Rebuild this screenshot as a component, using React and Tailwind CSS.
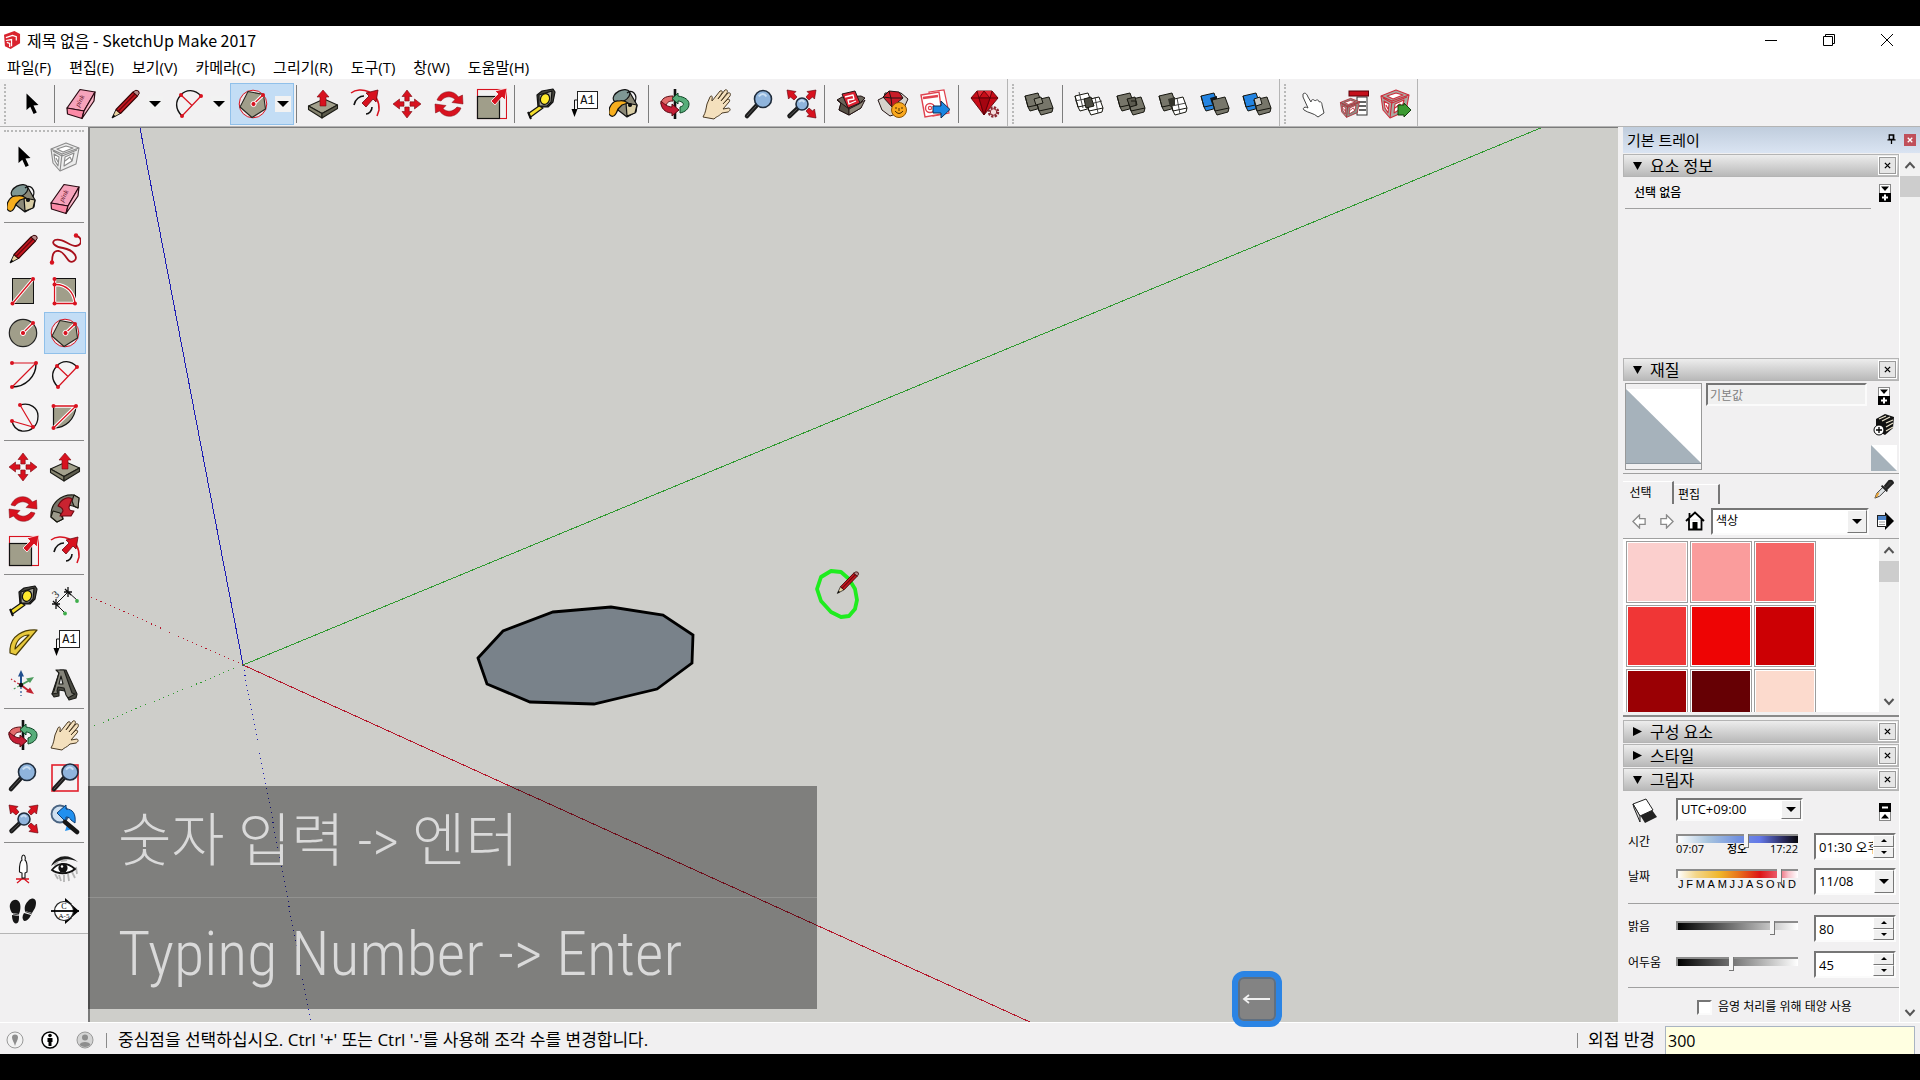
import { Fragment, useState } from "react";
import { clsx } from "clsx";

const RED = "#d8121f";
const STONE = "#a09e8a";
const DARK = "#77766a";

/* ---------- Tool icons, all drawn on a 32x32 grid ---------- */

const Dots = ({ points, r = 2 }) =>
  points.map(([x, y]) => <circle key={`${x}-${y}`} cx={x} cy={y} r={r} fill={RED} />);

const RedLine = ({ d }) => (
  <>
    <path d={d} fill="none" stroke="#fff" strokeWidth="3.4" />
    <path d={d} fill="none" stroke={RED} strokeWidth="1.3" />
  </>
);

const Lens = ({ cx = 20, cy = 11, r = 8.5, hx = 4, hy = 28 }) => (
  <>
    <path d={`M${cx - r * 0.7} ${cy + r * 0.7} L${hx} ${hy}`} stroke="#1b1b1b" strokeWidth="4.5" strokeLinecap="round" />
    <path d={`M${cx - r * 0.7 - 1} ${cy + r * 0.7 + 1} L${hx} ${hy}`} stroke="#555" strokeWidth="1" strokeLinecap="round" />
    <circle cx={cx} cy={cy} r={r} fill="#8fb4dc" stroke="#1f2c3c" strokeWidth="1.6" />
    <path d={`M${cx - r * 0.5} ${cy - r * 0.3} Q${cx} ${cy - r * 0.9} ${cx + r * 0.4} ${cy - r * 0.3}`} fill="none" stroke="#c9def2" strokeWidth="2" />
  </>
);

const Cube = ({ x = 0, y = 0, fill = DARK, stroke = "#16160f" }) => (
  <g transform={`translate(${x} ${y})`} stroke={stroke} strokeWidth="1" strokeLinejoin="round">
    <path d="M0 3 L13 0 L17 11 L16 15 L5 18 L3 14 Z" fill={fill} />
    <path d="M3 14 L17 11 M0 3 L3 14" fill="none" />
  </g>
);

const Box3D = ({ color = "#8b8b8b", fill = "#ececec" }) => (
  <g fill={fill} stroke={color} strokeWidth="1.1" strokeLinejoin="round">
    <path d="M2 8 L17 2 L30 7 L27 23 L11 30 L4 22 Z" />
    <path d="M2 8 L13 13 L30 7 M13 13 L11 30 M4 10 L13 15 L28 9" fill="none" />
    <path d="M8 8 L17 5 L24 7 L14 11 Z" fill="#fff" />
    <path d="M16 16 L25 12 L23 20 L15 25 Z" fill="#fff" />
    <path d="M5 13 L10 16 L9 25 L6 20 Z" fill="#fff" />
    <path d="M16 20 L21 16 L23 20 M7 17 L9 21" fill="none" />
  </g>
);

const ICONS = {
  select: <path d="M11.5 5.5 V22 L15.3 18.7 L18.6 26 L21.8 24.5 L18.5 17.5 L23.5 17 Z" fill="#000" />,
  component: <Box3D />,
  bucket: (
    <g stroke="#111" strokeWidth="1.2" strokeLinejoin="round">
      <path d="M6 9 L20 3 L28 17 L27 24 L18 29 L9 22 Z" fill="#8b8877" />
      <path d="M17 15 L28 17 L26 25 L18 28 Z" fill="#d9cda5" />
      <ellipse cx="12.5" cy="8" rx="9" ry="5.5" transform="rotate(-28 12.5 8)" fill="#7f9794" />
      <path d="M10 13 C4 12 -1 19 0 26 C4 31 7 27 9 21 L13 17 L19 15 C16 13 13 12 10 13 Z" fill="#f7ae1e" />
      <path d="M18 5 C23 0 29 7 26 14" fill="none" />
      <circle cx="21" cy="17" r="1.5" fill="#111" />
    </g>
  ),
  eraser: (
    <g stroke="#2a0a12" strokeWidth="1.2" strokeLinejoin="round">
      <path d="M2 20 L15 1.5 L30 4 L19 23 Z" fill="#f6a3bb" />
      <path d="M2 20 L19 23 L17 30.5 L2.5 26 Z" fill="#fb8aa6" />
      <path d="M19 23 L30 4 L29 13 L17 30.5 Z" fill="#f9b7c9" />
      <text x="12" y="18" transform="rotate(-62 14 17)" fontSize="7" fontStyle="italic" fill="#5e1226" stroke="none" className="font-['Liberation_Serif']">
        pink
      </text>
    </g>
  ),
  pencil: (
    <g strokeLinejoin="round">
      <path d="M3 30 L7 21.5 L11.5 25.5 Z" fill="#e9d3a1" stroke="#222" strokeWidth="1" />
      <path d="M3 30 L4.5 26.5 L6.5 28.3 Z" fill="#000" />
      <path d="M7 21.5 L24 4 L28.5 8 L11.5 25.5 Z" fill="#c5161f" stroke="#360406" strokeWidth="1.1" />
      <path d="M9 23.5 L26 6" stroke="#6d070d" strokeWidth="1.4" />
      <path d="M24 4 Q27 1 29.5 3 Q31.5 5 28.5 8 Z" fill="#b98a8a" stroke="#360406" strokeWidth="1" />
    </g>
  ),
  freehand: (
    <>
      <path
        d="M27 3 C33 4 34 12 27 13 C20 13 13 4 6 7 C1 10 7 14 14 15 C25 17 30 25 25 28 C18 32 18 20 10 18 C4 17 3 23 3 29"
        fill="none"
        stroke="#a80f1b"
        strokeWidth="1.8"
      />
      <Dots points={[[27, 2.5], [3, 29.5]]} r={2.2} />
    </>
  ),
  rectangle: (
    <>
      <rect x="5.5" y="3.5" width="21" height="25" fill={STONE} stroke="#111" />
      <RedLine d="M5.5 28.5 L26 4" />
      <Dots points={[[5.5, 28.5], [26, 4]]} />
    </>
  ),
  rotatedRectangle: (
    <>
      <rect x="5.5" y="3.5" width="21" height="25" fill={STONE} stroke="#111" />
      <RedLine d="M5.5 4 V28.5 H26 M5.5 9.5 C18 9 25 18 26 28" />
      <Dots points={[[5.5, 4], [5.5, 9.5], [5.5, 28.5], [26, 28.5]]} />
    </>
  ),
  circle: (
    <>
      <circle cx="16" cy="16" r="13.7" fill={STONE} stroke="#222" strokeWidth="1.2" />
      <RedLine d="M16 16 L26 6" />
      <circle cx="16" cy="16" r="2.6" fill={RED} stroke="#fff" />
      <Dots points={[[26, 6]]} />
    </>
  ),
  polygon: (
    <>
      <circle cx="16" cy="16" r="13.8" fill="#f3e6ea" stroke={RED} strokeWidth="1" />
      <path d="M11 3.5 L26.5 6.5 L28.5 21 L15 29.5 L3 19 Z" fill={STONE} stroke="#26261f" strokeWidth="1.1" />
      <RedLine d="M16.5 16 L26 7" />
      <circle cx="16.5" cy="16" r="2.6" fill={RED} stroke="#fff" />
      <Dots points={[[26, 7]]} />
    </>
  ),
  arc: (
    <>
      <path d="M29 5 C29 17 19 28 5 28" fill="none" stroke="#111" strokeWidth="1.4" />
      <path d="M5 4 H29 L5 28" fill="none" stroke={RED} strokeWidth="1.2" />
      <Dots points={[[5, 4], [29, 4], [5, 28]]} />
    </>
  ),
  twoPointArc: (
    <>
      <path d="M28 8 C22 1 13 1 8 7 C2 13 2 21 9 28" fill="none" stroke="#111" strokeWidth="1.4" />
      <path d="M28 8 L9 28 M8 7 L19 17.5" fill="none" stroke={RED} strokeWidth="1.2" />
      <Dots points={[[8, 7], [28, 8], [9, 28]]} />
    </>
  ),
  threePointArc: (
    <>
      <path d="M13 4 C23 1 31 7 31 15 C31 26 23 31 15 30 C9 29 6 25 5 20" fill="none" stroke="#111" strokeWidth="1.3" />
      <path d="M13 4 L26 26 L5 20" fill="none" stroke={RED} strokeWidth="1.2" />
      <Dots points={[[13, 4], [26, 26], [5, 20]]} />
    </>
  ),
  pie: (
    <>
      <path d="M4.5 5 H27 C26 19 16 27 4.5 27 Z" fill={STONE} stroke="#111" strokeWidth="1.2" />
      <RedLine d="M4.5 27 L27 5 H4.5" />
      <Dots points={[[4.5, 5], [27, 5], [4.5, 27]]} />
    </>
  ),
  move: (
    <g fill={RED} stroke="#7a0a12" strokeWidth="0.6">
      {[0, 90, 180, 270].map((angle) => (
        <path key={angle} transform={`rotate(${angle} 16 16)`} d="M16 2 L21 8.5 H18.2 V13 H13.8 V8.5 H11 Z" />
      ))}
    </g>
  ),
  pushPull: (
    <>
      <g stroke="#1c1c16" strokeWidth="1.1" strokeLinejoin="round">
        <path d="M1.5 18 L17 11 L30.5 17 L15 25.5 Z" fill="#a3a18d" />
        <path d="M1.5 18 V21.5 L15 30 V25.5 Z" fill="#86846f" />
        <path d="M15 25.5 L30.5 17 V20.5 L15 30 Z" fill="#5d5c4d" />
      </g>
      <path d="M16 2 L22 9 H19 V18 H13 V9 H10 Z" fill={RED} stroke="#7a0a12" strokeWidth="0.6" />
    </>
  ),
  rotate: (
    <g fill={RED} stroke="#7a0a12" strokeWidth="0.5">
      <path d="M4 12 C8 2 20 1 25.5 9 L29.5 7 L30 16 L19 14.5 L22 11.5 C18 7.5 12 8 8 13 Z" />
      <path d="M28 20 C24 30 12 31 6.5 23 L2.5 25 L2 16 L13 17.5 L10 20.5 C14 24.5 20 24 24 19 Z" />
    </g>
  ),
  followMe: (
    <g stroke="#17170f" strokeWidth="1.1" strokeLinejoin="round">
      <path d="M2 24 C1 10 12 1 25 2 L30 5 L29 15 L24 13 C18 11 12 17 14 26 L8 29 Z" fill={DARK} />
      <path d="M2 24 L4 18 L11 20 L14 26 L8 29 Z M25 2 L23 8 L25 13 L29 15 L30 5 Z" fill="#9b9a8b" />
      <path d="M9 13 C12 6 19 3 23 6 L20 14 C20 17 21 18 25 18 L22 23 L11 23 L14 18 C14 15 12 14 9 13 Z" fill="#c92330" stroke="#6d0710" />
    </g>
  ),
  scale: (
    <>
      <rect x="2.5" y="1.5" width="29" height="29" fill="none" stroke={RED} strokeWidth="1.1" />
      <rect x="2.5" y="8.5" width="22" height="22" fill={STONE} stroke="#111" strokeWidth="1.2" />
      <path d="M16 13 L23 6 L20 3 L32 0 L30 12 L27 9 L20 17 Z" fill={RED} stroke="#fff" strokeWidth="0.8" />
    </>
  ),
  offset: (
    <>
      <path d="M2 5 C11 -2 31 3 30 22 L28 28" fill="none" stroke={RED} strokeWidth="1.5" />
      <path d="M5 17 C6 11 11 8 15 8 M23 19 C23 23 20 26 17 26" fill="none" stroke="#111" strokeWidth="1.6" />
      <path d="M13 15 L20 8 L17 5 L29 2 L27 14 L24 11 L17 19 Z" fill={RED} stroke="#6d0710" strokeWidth="0.8" />
    </>
  ),
  tape: (
    <g stroke="#111" strokeWidth="1.2" strokeLinejoin="round">
      <path d="M12 7 L17 3 L28 1 L30 4 L28 14 L23 19 L13 19 Z" fill="#45453d" />
      <path d="M14 7 L27 3 L26 14 L22 18 L14 18 Z" fill="#a5a498" />
      <ellipse cx="20" cy="11" rx="4.5" ry="5.5" transform="rotate(20 20 11)" fill="#ffe92e" />
      <path d="M14 18 L4 25 L5 29.5 L18 20 Z" fill="#f3dd2d" />
      <path d="M3 24 L6 31" strokeWidth="2" />
    </g>
  ),
  dimension: (
    <>
      <path d="M7 19 L19 7 M7 19 L16 28 M19 7 L28 15" stroke="#111" strokeWidth="1" />
      <path d="M3 19 H11 M7 14 V24 M4 16 L10 22 M15 7 H23 M19 2 V12 M16 4 L22 10" stroke="#111" strokeWidth="1.3" />
      <text x="4" y="12" transform="rotate(-42 8 9)" fontSize="11" fill="#222" className="font-['Liberation_Serif']">3</text>
      <circle cx="16" cy="28.5" r="1.9" fill="#3fae4b" />
      <circle cx="28" cy="16" r="1.9" fill="#3fae4b" />
    </>
  ),
  protractor: (
    <g stroke="#4a3c05" strokeWidth="1.2" strokeLinejoin="round">
      <path d="M30 3 C16 2 4 9 3 22 L3 26 L9 28 Z" fill="#e8c93c" />
      <path d="M22 8 C15 8 9 13 8 22 Z" fill="#f5f5f5" />
    </g>
  ),
  text: (
    <>
      <path d="M10 12 H7.5 V22" fill="none" stroke="#111" />
      <path d="M4.5 21 H10.5 L7.5 29 Z" fill="#000" />
      <rect x="10.5" y="3.5" width="20" height="17" fill="#fff" stroke="#222" />
      <text x="20.5" y="16" textAnchor="middle" fontSize="12" fill="#111" className="font-['Liberation_Mono']">A1</text>
    </>
  ),
  axes: (
    <>
      <path d="M14 16 V6" stroke="#22508f" strokeWidth="2" />
      <path d="M14 1 L17 7.5 H11 Z" fill="#22508f" />
      <path d="M14 16 L23 11" stroke="#4d9c5e" strokeWidth="2" />
      <path d="M27 8 L23 14 L19 9.5 Z" fill="#4d9c5e" />
      <path d="M14 16 L22 22" stroke="#c22230" strokeWidth="2" />
      <path d="M27 25 L19 23 L23 18.5 Z" fill="#c22230" />
      <path d="M14 18 V27" stroke="#22508f" strokeWidth="1.2" strokeDasharray="2 2" />
      <path d="M12 15 L4 10" stroke="#c22230" strokeWidth="1.2" strokeDasharray="2 2" />
      <path d="M12 17 L5 21" stroke="#4d9c5e" strokeWidth="1.2" strokeDasharray="2 2" />
      <circle cx="14" cy="16" r="2.2" fill="#111" />
    </>
  ),
  text3d: (
    <g stroke="#1c1c18" strokeWidth="1.1" strokeLinejoin="round">
      <path d="M11 1 L17 1 L28 25 L27 29 L20 31 L16 22 L10 21 L10 27 L5 28 L3 25 Z" fill="#4a4a42" />
      <path d="M7 1 L15 1 L23 24 L26 25 L19 29 L17 26 L15 19 L9 18 L8 22 L9 24 L3 25 L5 22 L10 4 Z" fill="#85847a" />
      <path d="M12 7 L14 15 L10 15 Z" fill="#f0f0f0" />
    </g>
  ),
  orbit: (
    <>
      <path d="M16 1 V31" stroke="#111" strokeWidth="2.6" />
      <g strokeWidth="1" strokeLinejoin="round">
        <path d="M14 8 C6 8 2 11 2 16 L7 18 C8 14 10 13 14 13 Z" fill="#e26b6b" stroke="#5a0b12" />
        <path d="M2 16 C3 22 8 25 13 25 L13 28 L20 22 L13 16 L13 19 C9 19 5 16 2 13 Z" fill="#c41e36" stroke="#5a0b12" />
        <path d="M19 8 C26 9 30 12 30 16 C30 21 26 24 21 25 V19 C24 18 25 17 24 15 C23 14 21 13 19 13 V16 L13 10.5 L19 5 Z" fill="#57ad7a" stroke="#0d4424" />
      </g>
    </>
  ),
  hand: (
    <path
      d="M2 29 C5 24 5 20 6 16 L9 9 C10 7 12 8 11 11 L11 13 L19 3 C21 2 22 4 21 5 L17 11 L24 2 C26 1 27 3 26 5 L20 13 L27 5 C29 4 30 6 29 8 L22 16 L27 11 C29 11 29 13 28 14 L22 21 L28 20 C30 21 29 23 27 24 L21 25 C17 29 16 28 13 31 Z"
      fill="#f4e0bd"
      stroke="#4a3a24"
      strokeWidth="1"
      strokeLinejoin="round"
    />
  ),
  zoom: <Lens />,
  zoomWindow: (
    <>
      <rect x="3" y="4" width="26" height="26" fill="none" stroke="#e3202c" strokeWidth="1.6" />
      <Lens cx={21} cy={11} r={8} hx={5} hy={28} />
    </>
  ),
  zoomExtents: (
    <>
      <Lens cx={17} cy={16} r={6} hx={4.5} hy={28} />
      <g fill={RED} stroke="#5a0008" strokeWidth="0.6">
        <path d="M2 2 L11 3.5 L9 5.5 L12 9 L9 12 L5.5 9 L3.5 11 Z" />
        <path d="M31 2 L22 3.5 L24 5.5 L21 9 L24 12 L27.5 9 L29.5 11 Z" />
        <path d="M31 30 L22 28.5 L24 26.5 L21 23 L24 20 L27.5 23 L29.5 21 Z" />
      </g>
    </>
  ),
  zoomPrevious: (
    <>
      <circle cx="11" cy="11" r="8.5" fill="#cfe0f0" stroke="#4a6482" strokeWidth="1.8" />
      <path d="M8 10 L17 2 V6 C24 6 27 11 26 20 L22 17 C21 15 20 14 17 14 V19 Z" fill="#2190ef" stroke="#0b3d75" strokeWidth="1" />
      <path d="M18 22 L16 28 L24 26 Z" fill="#2190ef" />
      <path d="M16 19 L28 29" stroke="#161616" strokeWidth="4.5" strokeLinecap="round" />
    </>
  ),
  positionCamera: (
    <>
      <path d="M10 30 L16 25 L22 30 M9 26 L22 26" stroke={RED} strokeWidth="1.3" fill="none" />
      <path d="M16.5 2 C18.5 2 18.5 6 18 7 C21 9 20 16 20 19 L18 20 V25 H15 V20 L12.5 19 C12.5 16 12 9 15 7 C14.5 6 14.5 2 16.5 2 Z" fill="#fff" stroke="#111" strokeWidth="1.1" />
    </>
  ),
  eye: (
    <>
      <path d="M2 13 C7 2 19 0 29 9 C20 4 10 6 2 13 Z" fill="#1a1a1a" />
      <path d="M6 21 L9 26 M10 22 L12 28 M15 22 L15 29 M19 21 L20 28 M23 19 L26 25 M27 14 L28 21 M5 12 L9 9 M12 8 L18 7" stroke="#b5b5b5" strokeWidth="1.8" />
      <path d="M3 17 C8 10 17 8 26 16 C19 22 8 21 3 17 Z" fill="#fff" stroke="#111" strokeWidth="1.8" />
      <circle cx="14" cy="15" r="4.6" fill="#111" />
      <circle cx="13" cy="13.5" r="1.2" fill="#fff" />
    </>
  ),
  walk: (
    <>
      <g fill="#161616">
        <path d="M5 6 C11 2 15 8 13 16 L12 19 L5 18 C2 13 2 9 5 6 Z M5 20 L12 21 C12 25 12 28 9 28.5 C6 28 5 24 5 20 Z" />
        <path d="M22 5 C27 1 31 5 28 13 L25 18 L18 16 C17 11 19 8 22 5 Z M17 18 L24 20 C22 24 20 26 17 26 C15 24 15 21 17 18 Z" />
      </g>
      <path d="M6 19 L12 20 M18 16.5 L25 19" stroke="#161616" strokeWidth="0.8" />
    </>
  ),
  section: (
    <>
      <path d="M16 3 L23 9 H16 Z M16 29 L23 23 H16 Z M22 9 L30 16 L22 23 Z" fill="#000" />
      <circle cx="15" cy="16" r="9.5" fill="#fff" stroke="#222" strokeWidth="1.2" />
      <path d="M2 16 H30" stroke="#000" strokeWidth="1.8" />
      <text x="15" y="14" textAnchor="middle" fontSize="8" className="font-['Liberation_Serif']">C</text>
      <text x="15" y="23" textAnchor="middle" fontSize="7" className="font-['Liberation_Serif']">A-5</text>
    </>
  ),
  warehouse: (
    <g stroke="#231414" strokeWidth="1" strokeLinejoin="round">
      <path d="M2 12 L7 9 L26 8 L30 10 L26 14 L26 20 L14 27 L4 22 L6 15 Z" fill="#6a655b" />
      <path d="M2 12 L6 15 L4 22 L14 27 L14 21 Z" fill="#565046" />
      <path d="M7 6 L20 3 L25 15 L13 20 Z" fill="#d92030" />
      <path d="M10 9 L18 7 L19 11 L13 12 L14 16 L21 13" fill="none" stroke="#fff" strokeWidth="1.3" />
      <path d="M14 21 L24 16 L30 12 L26 20 L14 27 Z" fill="#8c8678" />
    </g>
  ),
  extensionWarehouse: (
    <g stroke="#231414" strokeWidth="1" strokeLinejoin="round">
      <path d="M1 12 L7 9 L8 5 L24 5 L31 11 L25 24 L13 28 L5 22 Z" fill="#d6d2cc" />
      <path d="M6 9 L12 3 L22 4 L26 10 L15 19 Z" fill="#c91d28" />
      <path d="M6 9 L14 10 L26 10 M12 3 L14 10 L15 19" fill="none" />
      <circle cx="22" cy="22" r="7.5" fill="#f9a71c" stroke="#8a5304" />
      <path d="M18 23 Q22 28 26 23 M19 19 V21 M25 19 V21 M22 20 V23" fill="none" stroke="#4b2c00" />
    </g>
  ),
  sendLayout: (
    <>
      <path d="M10 4 L25 2 L30 25 L14 28 Z" fill="#fff" stroke="#e0424e" strokeWidth="1.2" />
      <path d="M2 7 L20 4 L23 26 L6 29 Z" fill="#fff" stroke="#e0424e" strokeWidth="1.4" />
      <path d="M4 10 L19 8" stroke="#e0424e" strokeWidth="2.5" />
      <circle cx="11" cy="20" r="4.5" fill="none" stroke="#e0424e" strokeWidth="1.4" />
      <circle cx="11" cy="20" r="1.6" fill="none" stroke="#e0424e" strokeWidth="1.2" />
      <path d="M14 18 H22 V13 L31 21.5 L22 30 V25 H14 Z" fill="#1a86e2" stroke="#0b2d52" strokeWidth="1" />
    </>
  ),
  ruby: (
    <>
      <g stroke="#5c0007" strokeWidth="0.9" strokeLinejoin="round">
        <path d="M2 10 L8 3 H23 L29 10 L15 27 Z" fill="#c80c18" />
        <path d="M8 3 L10 10 L15 3 L21 10 L23 3 M2 10 H29 M10 10 L15 27 L21 10" fill="#e02a36" />
        <path d="M10 10 L15 27 L21 10 Z" fill="#a40410" />
      </g>
      <circle cx="24.5" cy="24" r="4.5" fill="#f5dede" stroke="#8a2630" strokeWidth="2.5" strokeDasharray="2.2 1.3" />
      <circle cx="24.5" cy="24" r="3.2" fill="#f5dede" stroke="#8a2630" strokeWidth="1" />
    </>
  ),
  outerShell: (
    <>
      <Cube x={2} y={5} />
      <Cube x={13} y={9} />
      <path d="M11 11 L18 9 L20 15 L13 17 Z" fill="#8d8c7e" stroke="#16160f" />
    </>
  ),
  intersect: (
    <>
      <Cube x={2} y={5} fill="#fff" />
      <Cube x={13} y={9} fill="#fff" />
      <path d="M6 4 L10 20 M2 13 L16 10 M17 16 L29 13 M22 9 L25 25" stroke="#333" strokeWidth="0.9" />
      <path d="M11 11 L18 9 L21 18 L13 20 Z" fill="#4b4b42" stroke="#16160f" />
    </>
  ),
  union: (
    <>
      <Cube x={2} y={5} />
      <Cube x={13} y={9} />
      <path d="M12 11 L20 9 L22 17 L15 19 Z M16 13 H21 V17" fill="#5a594e" stroke="#16160f" />
    </>
  ),
  subtract: (
    <>
      <Cube x={2} y={5} />
      <Cube x={13} y={9} fill="#fff" />
      <path d="M20 10 L23 26 M15 18 L29 15" stroke="#333" strokeWidth="0.9" />
      <path d="M11 11 L18 9 L18 17 L13 19 Z" fill="#33332b" />
    </>
  ),
  trim: (
    <>
      <Cube x={2} y={5} fill="#2384e2" />
      <path d="M11 10 L18 8 V14 L13 16 Z" fill="#101820" />
      <Cube x={13} y={9} />
    </>
  ),
  split: (
    <>
      <Cube x={2} y={5} fill="#2384e2" />
      <Cube x={13} y={9} />
      <path d="M13 11 L19 9 L21 16 L15 18 Z" fill="#c9c9c5" stroke="#16160f" />
    </>
  ),
  interact: (
    <path
      d="M6 6 C8 4 10 6 11 9 L14 14 C14 11 17 11 18 13 C20 11 22 12 22 14 C24 13 25 15 25 17 L27 25 L21 29 C17 25 11 25 7 22 C5 20 8 18 11 20 L6 9 Z"
      fill="#fff"
      stroke="#444"
      strokeWidth="1"
      transform="translate(2 0)"
    />
  ),
  componentOptions: (
    <>
      <rect x="20" y="9" width="10" height="18" fill="#fff" stroke="#333" />
      <path d="M22 14 H29 M22 18 H29 M22 22 H29" stroke="#333" strokeWidth="1.5" />
      <rect x="12" y="3" width="19.5" height="5" fill="#c5111d" stroke="#5a0008" />
      <g transform="translate(2 9) scale(.68)">
        <Box3D color="#b51f2c" fill="#8d8d85" />
      </g>
    </>
  ),
  componentAttributes: (
    <>
      <Box3D color="#cf2c3a" fill="#a9a9a2" />
      <path d="M19 17 H25 V15 L32 22 L25 29 V27 H19 Z" fill="#3c9a32" stroke="#123f0d" />
    </>
  ),
};

const Icon = ({ name }) => (
  <svg viewBox="0 0 32 32" className="h-8 w-8 shrink-0" aria-hidden="true">
    {ICONS[name]}
  </svg>
);

/* ---------- Top toolbar ---------- */

const menus = ["파일(F)", "편집(E)", "보기(V)", "카메라(C)", "그리기(R)", "도구(T)", "창(W)", "도움말(H)"];

const toolbars = [
  [
    ["select"],
    ["eraser", "pencil+", "twoPointArc+", "polygon+"],
    ["pushPull", "offset", "move", "rotate", "scale"],
    ["tape", "text", "bucket"],
    ["orbit", "hand", "zoom", "zoomExtents"],
    ["warehouse", "extensionWarehouse", "sendLayout"],
    ["ruby"],
  ],
  [["outerShell"], ["intersect", "union", "subtract", "trim", "split"]],
  [["interact", "componentOptions", "componentAttributes"]],
];

const Caret = ({ className, up }) => (
  <svg viewBox="0 0 12 6" className={className} preserveAspectRatio="none" aria-hidden="true">
    <path d={up ? "M0 6 L6 0 L12 6 Z" : "M0 0 L6 6 L12 0 Z"} fill="#000" />
  </svg>
);

const ToolButton = ({ name, active, onClick }) => (
  <button
    aria-label={name}
    onClick={onClick}
    className={clsx(
      "flex h-[42px] w-[42px] items-center justify-center border",
      active ? "border-[#90c0ea] bg-[#c3ddf5]" : "border-transparent"
    )}
  >
    <Icon name={name} />
  </button>
);

const SplitButton = ({ name, active, onClick }) => (
  <div
    className={clsx(
      "flex h-[42px] w-16 items-center border",
      active ? "border-[#90c0ea] bg-[#c3ddf5]" : "border-transparent"
    )}
  >
    <button aria-label={name} onClick={onClick} className="flex w-11 justify-center">
      <Icon name={name} />
    </button>
    <button aria-label={`${name} menu`} className="flex h-4 w-4 items-center justify-center bg-[#f2f2f2]">
      <Caret className="h-[6px] w-[12px]" />
    </button>
  </div>
);

const Toolbar = ({ tool, setTool }) => (
  <div className="flex h-12 shrink-0 border-b border-[#b4b4b4] bg-[#f2f1f2]">
    {toolbars.map((groups, i) => (
      <div key={i} className="flex items-center border-r border-[#b5b5b5] pt-[2px] pr-px">
        <div className="mr-1 ml-1 h-[40px] border-l-2 border-dotted border-[#b9b9b9]" />
        {groups.map((group, j) => (
          <Fragment key={j}>
            {j > 0 && <div className="mr-[5px] ml-[2px] h-[38px] w-px bg-[#7d7d7d]" />}
            {group.map((item) => {
              const name = item.replace("+", "");
              const Button = item.endsWith("+") ? SplitButton : ToolButton;
              return (
                <Button
                  key={item}
                  name={name}
                  active={name === tool && item.endsWith("+")}
                  onClick={() => setTool(name)}
                />
              );
            })}
          </Fragment>
        ))}
      </div>
    ))}
  </div>
);

/* ---------- Left palette ---------- */

const palette = [
  ["select", "component", "bucket", "eraser"],
  [
    "pencil", "freehand", "rectangle", "rotatedRectangle", "circle",
    "polygon", "arc", "twoPointArc", "threePointArc", "pie",
  ],
  ["move", "pushPull", "rotate", "followMe", "scale", "offset"],
  ["tape", "dimension", "protractor", "text", "axes", "text3d"],
  ["orbit", "hand", "zoom", "zoomWindow", "zoomExtents", "zoomPrevious"],
  ["positionCamera", "eye", "walk", "section"],
];

const Palette = ({ tool, setTool }) => (
  <aside className="w-[88px] shrink-0">
    <div className="border-b border-[#b5b5b5] bg-[#f4f3f4] pt-[3px] pb-px">
      <div className="mx-1 mb-1 border-t-2 border-dotted border-[#b9b9b9]" />
      {palette.map((group, i) => (
        <Fragment key={i}>
          {i > 0 && <div className="mx-1 mt-[2px] mb-[5px] h-px bg-[#8a8a8a]" />}
          <div className="grid w-[86px] grid-cols-2 pl-[2px]">
            {group.map((name) => (
              <ToolButton key={name} name={name} active={name === tool} onClick={() => setTool(name)} />
            ))}
          </div>
        </Fragment>
      ))}
    </div>
  </aside>
);

/* ---------- Model view ---------- */

const Viewport = () => (
  <main className="relative min-w-0 flex-1 border-t border-l-2 border-[#7b7b7b] bg-[#cececa]">
    <svg viewBox="90 128 1528 894" preserveAspectRatio="xMinYMin slice" className="absolute inset-0 h-full w-full">
      <g strokeWidth="1" fill="none" shapeRendering="crispEdges">
        <path d="M243 665 L140 128" stroke="#1c1cb4" />
        <path d="M243 665 L1543 127" stroke="#2f9a2f" />
        <path d="M243 665 L1030 1022" stroke="#b4182c" />
        <path d="M243 665 L89 596" stroke="#b4182c" strokeDasharray="1 4" />
        <path d="M243 665 L89 728" stroke="#2f9a2f" strokeDasharray="1 4" />
        <path d="M243 665 L311 1022" stroke="#1c1cb4" strokeDasharray="1 4" />
      </g>
      <path
        d="M478 658 L503 631 L553 612 L611 607 L663 615 L693 635 L692 663 L657 689 L594 704 L530 702 L487 684 Z"
        fill="#79828a"
        stroke="#000"
        strokeWidth="2.8"
      />
      <path
        d="M831 571 L841 572 L849 579 L855 589 L857 600 L855 609 L849 616 L841 617 L831 612 L821 601 L817 589 L821 577 Z"
        fill="none"
        stroke="#1fec1f"
        strokeWidth="3.8"
        strokeLinejoin="round"
      />
      <g transform="translate(835 570) scale(.78)">{ICONS.pencil}</g>
    </svg>
    <div className="absolute bottom-[13px] left-[-2px] w-[729px] bg-black/38 font-['Roboto_Condensed','Noto_Sans_CJK_KR',sans-serif] leading-[111px] font-light text-[#dadada]">
      <p className="border-b border-white/15 pl-[30px] text-[58px]">숫자 입력 -&gt; 엔터</p>
      <p className="pl-[30px] text-[62px]">Typing Number -&gt; Enter</p>
    </div>
    <div className="absolute right-[336px] bottom-[-5px] flex h-[56px] w-[50px] items-center justify-center rounded-[12px] border-[6px] border-[#2b84e4] bg-[#838383] shadow-[inset_0_0_0_2px_#5f6f80]">
      <svg viewBox="0 0 32 20" className="h-5 w-8" aria-label="←">
        <path d="M3 10 H29 M8 6 L3 10 L8 14" fill="none" stroke="#f0f0f0" strokeWidth="1.8" />
      </svg>
    </div>
  </main>
);

/* ---------- Tray ---------- */

const sunken = "border-2 border-t-[#767676] border-l-[#767676] border-r-[#fbfbfb] border-b-[#fbfbfb]";
const raised = "border border-t-white border-l-white border-r-[#777] border-b-[#777] bg-[#f0f0f0]";

const SectionHeader = ({ title, open }) => (
  <div className="mb-px flex h-[23px] shrink-0 items-center border border-[#b4b4b4] bg-linear-to-b from-[#ededed] to-[#b9b9b9] pr-[2px] pl-[9px]">
    <button className="flex flex-1 items-center gap-2 text-left text-[16px] leading-5">
      <svg viewBox="0 0 10 10" className="h-[9px] w-[9px]" aria-hidden="true">
        <path d={open ? "M0 1 H10 L5 10 Z" : "M0 0 L10 5 L0 10 Z"} />
      </svg>
      {title}
    </button>
    <button aria-label={`${title} close`} className="flex h-[17px] w-[17px] items-center justify-center border border-[#9b9b9b] bg-[#e6e6e6] outline outline-white">
      <svg viewBox="0 0 8 8" className="h-[7px] w-[7px]" aria-hidden="true">
        <path d="M1 1 L7 7 M7 1 L1 7" stroke="#000" strokeWidth="1.5" />
      </svg>
    </button>
  </div>
);

const ExpandIcon = ({ flip }) => (
  <svg viewBox="0 0 12 18" className={clsx("h-[18px] w-3", flip && "rotate-180")} aria-hidden="true">
    <rect x=".5" y=".5" width="11" height="17" fill="#fff" stroke="#888" />
    <path d="M2 2.5 H10 L6 7 Z" />
    <rect y="9" width="12" height="9" />
    <path d={flip ? "M3 13.5 H9" : "M3 13.5 H9 M6 10.5 V16.5"} stroke="#fff" strokeWidth="2" />
  </svg>
);

const Chevron = ({ down }) => (
  <svg viewBox="0 0 12 8" className={clsx("h-2 w-3", down && "rotate-180")} aria-hidden="true">
    <path d="M1.5 7 L6 2 L10.5 7" fill="none" stroke="#555" strokeWidth="2" />
  </svg>
);

const ScrollBar = ({ className }) => (
  <div className={clsx("flex flex-col items-center bg-[#f1f1f1]", className)}>
    <div className="flex h-[22px] items-center"><Chevron /></div>
    <div className="h-[21px] w-full bg-[#cdcdcd]" />
    <div className="mt-auto flex h-[18px] items-center"><Chevron down /></div>
  </div>
);

const DropDown = ({ id, label, value, className }) => (
  <div className={clsx("flex bg-white", sunken, className)}>
    <select id={id} aria-label={label} className="min-w-0 flex-1 appearance-none bg-white pl-[3px] outline-none">
      <option>{value}</option>
    </select>
    <span className={clsx("pointer-events-none flex w-5 items-center justify-center", raised)}>
      <Caret className="h-[5px] w-[10px]" />
    </span>
  </div>
);

const Spinner = ({ id, value }) => (
  <div className={clsx("flex h-[27px] w-[82px] bg-white", sunken)}>
    <input id={id} defaultValue={value} className="w-[57px] min-w-0 pl-[3px] leading-5 outline-none" />
    <div className="flex w-[21px] flex-col">
      <button aria-label="up" className={clsx("flex flex-1 items-center justify-center", raised)}>
        <Caret up className="h-[3px] w-[6px]" />
      </button>
      <button aria-label="down" className={clsx("flex flex-1 items-center justify-center", raised)}>
        <Caret className="h-[3px] w-[6px]" />
      </button>
    </div>
  </div>
);

const sliderBase =
  "relative block h-[9px] w-full appearance-none bg-transparent [&::-webkit-slider-runnable-track]:h-[9px] [&::-webkit-slider-runnable-track]:border-t-2 [&::-webkit-slider-runnable-track]:border-l-2 [&::-webkit-slider-runnable-track]:border-[#8c8c8c] [&::-webkit-slider-thumb]:mt-[-2px] [&::-webkit-slider-thumb]:h-[14px] [&::-webkit-slider-thumb]:w-[5px] [&::-webkit-slider-thumb]:appearance-none [&::-webkit-slider-thumb]:border-r [&::-webkit-slider-thumb]:border-b [&::-webkit-slider-thumb]:border-[#777] [&::-webkit-slider-thumb]:bg-[#f4f4f4]";

const sliderTracks = {
  time: "[&::-webkit-slider-runnable-track]:bg-[linear-gradient(90deg,#fff,#a8c4de_25%,#7292e0_50%,#6478e8_68%,#2a2a5c_88%,#08080c)]",
  date: "[&::-webkit-slider-runnable-track]:bg-[linear-gradient(90deg,#fff,#f3d68a_15%,#efb52a_35%,#e8741c_50%,#dd1414_68%,#ec6070_84%,#f8c4cc_92%,#fff)]",
  gray: "[&::-webkit-slider-runnable-track]:bg-[linear-gradient(90deg,#000,#fff)]",
};

const Slider = ({ label, value, track }) => (
  <input type="range" aria-label={label} defaultValue={value} className={clsx(sliderBase, sliderTracks[track])} />
);

const ShadowRow = ({ id, label, slider, field, children, className }) => (
  <div className={clsx("flex h-[27px] items-start", className)}>
    <label htmlFor={id} className={clsx("w-[48px] shrink-0 text-[12px] leading-[18px]", !children && "pt-[3px]")}>
      {label}
    </label>
    <div className={clsx("w-[122px]", children ? "pt-px" : "pt-[6px]")}>
      {slider}
      {children}
    </div>
    <div className="ml-4">{field}</div>
  </div>
);

const swatches = [
  "bg-[#fbcfcd]", "bg-[#fa9c9c]", "bg-[#f56666]",
  "bg-[#f03636]", "bg-[#ee0404]", "bg-[#cc0004]",
  "bg-[#9a0004]", "bg-[#660004]", "bg-[#fcdacd]",
];

const Halves = ({ className }) => (
  <svg viewBox="0 0 10 10" preserveAspectRatio="none" className={className} aria-hidden="true">
    <path d="M0 0 H10 V10 Z" fill="#fff" />
    <path d="M0 0 L10 10 H0 Z" fill="#a6b2bb" />
  </svg>
);

const Materials = () => (
  <section>
    <SectionHeader title="재질" open />
    <div className="flex h-[92px] border-b border-[#a0a0a0] pt-px pl-[2px]">
      <div className="h-[87px] w-[77px] border border-[#999] pt-[5px]">
        <Halves className="h-[75px] w-full border-b border-[#8a959e]" />
      </div>
      <input
        aria-label="재질 이름"
        disabled
        defaultValue="기본값"
        className={clsx("ml-1 h-[23px] w-[161px] bg-[#f0f0f0] pl-[2px] text-[12px] text-[#808080]", sunken)}
      />
      <div className="ml-[3px] flex w-[27px] flex-col items-center gap-[9px] pt-1">
        <ExpandIcon />
        <svg viewBox="0 0 22 22" className="h-[22px] w-[22px]" aria-hidden="true">
          <path d="M3 5 L12 0 L21 3 L20 14 L12 21 L3 16 Z" fill="#111" />
          <path d="M6 5 L13 2 M9 7 L17 3 M13 9 L20 6 M13 13 L20 9 M13 17 L20 13" stroke="#e8e0c8" strokeWidth="1.3" />
          <circle cx="6" cy="16" r="5" fill="#fff" stroke="#000" />
          <path d="M6 13 V19 M3 16 H9" stroke="#000" strokeWidth="1.3" />
        </svg>
        <Halves className="h-[26px] w-[26px]" />
      </div>
    </div>

    <div className="flex h-[30px] items-end text-[12px]">
      <button className="h-[23px] w-[51px] border-t border-r-2 border-t-white border-r-[#777] pr-[14px]">선택</button>
      <button className="h-[20px] w-[46px] border-t border-r-2 border-t-white border-r-[#777] pr-[14px]">편집</button>
      <button aria-label="dropper" className="mr-[5px] mb-1 ml-auto">
        <svg viewBox="0 0 22 22" className="h-[21px] w-[21px]" aria-hidden="true">
          <path d="M2 20 L4 15 L11 8 L14 11 L7 18 Z" fill="#dfe3e6" stroke="#333" />
          <path d="M2 20 L4 15 L7 14 L5 18 Z" fill="#e9a437" />
          <path d="M9 7 L15 13 M12 8 L17 2 Q20 1 21 4 L14 11" fill="#333" stroke="#222" strokeWidth="2" />
        </svg>
      </button>
    </div>

    <div className="flex h-[35px] items-center border-b border-[#a0a0a0] pl-[9px]">
      <button aria-label="back">
        <svg viewBox="0 0 16 16" className="h-[15px] w-[15px]" fill="#fff" stroke="#8a8a8a" strokeWidth="1.4">
          <path d="M1 8 L8 1 V5 H14 V11 H8 V15 Z" />
        </svg>
      </button>
      <button aria-label="forward" className="ml-3">
        <svg viewBox="0 0 16 16" className="h-[15px] w-[15px]" fill="#fff" stroke="#8a8a8a" strokeWidth="1.4">
          <path d="M15 8 L8 1 V5 H2 V11 H8 V15 Z" />
        </svg>
      </button>
      <button aria-label="home" className="ml-[11px]">
        <svg viewBox="0 0 20 20" className="h-5 w-5" aria-hidden="true">
          <path d="M1 10 L10 1.5 L19 10 M4 8 V18.5 H16.5 V8 M4.5 6 V2" fill="#fff" stroke="#000" strokeWidth="1.8" />
          <rect x="7.5" y="11" width="5" height="8" />
        </svg>
      </button>
      <DropDown label="재질 목록" value="색상" className="ml-[6px] h-[27px] w-[158px] text-[12px]" />
      <button aria-label="details" className="ml-2">
        <svg viewBox="0 0 18 18" className="h-[18px] w-[18px]" aria-hidden="true">
          <path d="M8 0 L17 9 L8 18 Z" />
          <rect x=".5" y="3.5" width="9" height="11" fill="#fff" stroke="#222" />
          <rect x="1" y="4" width="8" height="4" fill="#4d83c8" />
          <path d="M2 10 H8 M2 12.5 H8" stroke="#999" />
        </svg>
      </button>
    </div>

    <div className="flex h-[173px] overflow-hidden bg-white">
      <div className="grid grid-cols-[62px_62px_62px] content-start gap-[2px] overflow-hidden pt-[2px] pl-[3px]">
        {swatches.map((color) => (
          <button key={color} aria-label={color} className="h-[62px] border border-[#9d9d9d] p-px">
            <span className={clsx("block h-full w-full", color)} />
          </button>
        ))}
      </div>
      <ScrollBar className="ml-auto w-[20px] pb-[1px]" />
    </div>
    <div className="mt-[3px] mb-[3px] h-[2px] bg-[#8a8a8a]" />
  </section>
);

const Shadows = () => (
  <section className="pl-[5px] text-[13px]">
    <div className="flex h-[29px] items-start pt-[6px]">
      <svg viewBox="0 0 26 26" className="mr-[18px] ml-1 h-[26px] w-[26px] shrink-0" aria-hidden="true">
        <path d="M8 17 L20 12 L25 19 L13 25 Z" fill="#222" />
        <path d="M1 6 L14 1 L21 12 L8 18 Z" fill="#fff" stroke="#222" />
        <path d="M1 6 L8 18 V24 L2 10 Z" fill="#ddd" stroke="#222" />
      </svg>
      <DropDown label="시간대" value="UTC+09:00" className="h-[23px] w-[127px]" />
      <button aria-label="details" className="mt-[5px] mr-2 ml-auto"><ExpandIcon flip /></button>
    </div>
    <ShadowRow
      id="time"
      label="시간"
      className="mt-3"
      slider={<Slider label="시간" value={57} track="time" />}
      field={<Spinner id="time" value="01:30 오후" />}
    >
      <div className="mt-[-2px] flex justify-between text-[11px] leading-4 font-medium">
        <span>07:07</span>
        <span>정오</span>
        <span>17:22</span>
      </div>
    </ShadowRow>
    <ShadowRow
      id="date"
      label="날짜"
      className="mt-2"
      slider={<Slider label="날짜" value={86} track="date" />}
      field={<DropDown id="date" value="11/08" className="h-[27px] w-[82px]" />}
    >
      <div className="mt-[-2px] flex justify-between px-[2px] font-['Liberation_Sans',sans-serif] text-[11px] leading-4 font-medium">
        {"JFMAMJJASOND".split("").map((month, i) => (
          <span key={i}>{month}</span>
        ))}
      </div>
    </ShadowRow>
    <div className="mt-2 h-px bg-[#a0a0a0]" />
    <ShadowRow
      id="light"
      label="밝음"
      className="mt-[11px]"
      slider={<Slider label="밝음" value={80} track="gray" />}
      field={<Spinner id="light" value="80" />}
    />
    <ShadowRow
      id="dark"
      label="어두움"
      className="mt-[9px]"
      slider={<Slider label="어두움" value={44} track="gray" />}
      field={<Spinner id="dark" value="45" />}
    />
    <div className="mt-[9px] h-px bg-[#a0a0a0]" />
    <label className="mt-[9px] ml-[69px] flex items-center gap-[6px] text-[12px] leading-5">
      <input type="checkbox" className={clsx("h-[15px] w-[15px] appearance-none bg-white", sunken)} />
      음영 처리를 위해 태양 사용
    </label>
  </section>
);

const Tray = () => (
  <aside className="ml-[5px] flex w-[297px] shrink-0 flex-col overflow-hidden">
    <div className="mb-px flex h-[26px] shrink-0 items-center bg-linear-to-b from-[#c0cddd] to-[#dae4f2] pr-1 pb-px pl-1">
      <h2 className="flex-1 text-[15px] leading-5">기본 트레이</h2>
      <button aria-label="pin" className="mr-2">
        <svg viewBox="0 0 10 12" className="h-[11px] w-[9px]" fill="none" stroke="#000" strokeWidth="1.4">
          <path d="M2.5 1 H7.5 V6 H2.5 Z M0.5 6.5 H9.5 M5 7 V11 M7 1 V6" />
        </svg>
      </button>
      <button aria-label="close" className="flex h-3 w-3 items-center justify-center bg-[#c0505a]">
        <svg viewBox="0 0 8 8" className="h-[6px] w-[6px]"><path d="M1 1 L7 7 M7 1 L1 7" stroke="#fff" strokeWidth="1.8" /></svg>
      </button>
    </div>
    <div className="flex min-h-0 flex-1">
      <div className="w-[276px] shrink-0 overflow-hidden">
        <section className="h-[204px]">
          <SectionHeader title="요소 정보" open />
          <div className="flex items-start pr-2">
            <div className="ml-[2px] w-[246px] border-b border-[#a0a0a0] pt-1 pb-1 pl-[9px]">
              <p className="text-[12px] leading-[22px] font-medium">선택 없음</p>
            </div>
            <button aria-label="details" className="mt-[6px] ml-auto"><ExpandIcon /></button>
          </div>
        </section>
        <Materials />
        <SectionHeader title="구성 요소" />
        <SectionHeader title="스타일" />
        <SectionHeader title="그림자" open />
        <Shadows />
      </div>
      <ScrollBar className="flex-1 border-l border-white" />
    </div>
  </aside>
);

/* ---------- Status bar ---------- */

const StatusBar = () => (
  <footer className="flex h-8 shrink-0 items-center border-t border-white pt-[3px] pl-[6px] text-[17px] leading-6">
    <div className="flex gap-[17px]">
      <svg viewBox="0 0 18 18" className="h-[18px] w-[18px]" aria-hidden="true">
        <circle cx="9" cy="9" r="8" fill="#f2f2f2" stroke="#9a9a9a" />
        <path d="M9 15 C8 11 6 9 6 6.5 A3 3 0 0 1 12 6.5 C12 9 10 11 9 15 Z" fill="#8d8d8d" />
      </svg>
      <svg viewBox="0 0 18 18" className="h-[18px] w-[18px]" aria-hidden="true">
        <circle cx="9" cy="9" r="8" fill="#fff" stroke="#000" strokeWidth="1.5" />
        <circle cx="9" cy="4.5" r="1.8" />
        <path d="M6.5 7 H11.5 V11 H10.5 V15 H7.5 V11 H6.5 Z" />
      </svg>
      <svg viewBox="0 0 18 18" className="h-[18px] w-[18px]" aria-hidden="true">
        <circle cx="9" cy="9" r="8" fill="#d4d4d4" stroke="#9a9a9a" />
        <circle cx="9" cy="6.5" r="3" fill="#8d8d8d" />
        <path d="M3.5 14 C4 10 14 10 14.5 14 Q9 18 3.5 14 Z" fill="#8d8d8d" />
      </svg>
    </div>
    <div className="mr-[11px] ml-3 h-[15px] w-px bg-[#8a8a8a]" />
    <p className="flex-1">중심점을 선택하십시오. Ctrl &apos;+&apos; 또는 Ctrl &apos;-&apos;를 사용해 조각 수를 변경합니다.</p>
    <div className="mr-[10px] h-[15px] w-px bg-[#8a8a8a]" />
    <label htmlFor="measure">외접 반경</label>
    <input
      id="measure"
      defaultValue="300"
      className="mr-[5px] ml-[10px] h-[28px] w-[250px] self-end border border-b-0 border-[#a9b4c2] bg-[#ffffe1] pl-[2px] text-[16px] outline-none"
    />
  </footer>
);

const App = () => {
  const [tool, setTool] = useState("polygon");

  return (
    <div className="h-screen bg-black py-[26px]">
      <div className="flex h-full flex-col overflow-hidden bg-[#f1f0f1] font-['Open_Sans','Noto_Sans_CJK_KR',sans-serif] text-black">
        <header className="flex h-[28px] shrink-0 items-center bg-white">
          <svg viewBox="0 0 18 20" className="ml-1 h-[19px] w-[17px]" aria-hidden="true">
            <path d="M0 4 L11 0 L17 3 V13 L7 19 L1 16 Z" fill="#d9232e" />
            <path d="M2 7 L9 4.5 L13 6 V10 M2 10 L8 9 V16 M3 12 L6 13 V17" fill="none" stroke="#fff" strokeWidth="1.3" />
          </svg>
          <h1 className="ml-[6px] flex-1 font-['Noto_Sans_CJK_KR',sans-serif] text-[16px] leading-6">제목 없음 - SketchUp Make 2017</h1>
          <button aria-label="minimize" className="flex w-[58px] justify-center">
            <svg viewBox="0 0 14 14" className="h-[14px] w-[14px]"><path d="M1 7.5 H13" stroke="#000" /></svg>
          </button>
          <button aria-label="restore" className="flex w-[58px] justify-center">
            <svg viewBox="0 0 14 14" className="h-[14px] w-[14px]" fill="none" stroke="#000">
              <path d="M1.5 3.5 H10.5 V12.5 H1.5 Z M3.5 3.5 V1.5 H12.5 V10.5 H10.5" />
            </svg>
          </button>
          <button aria-label="close" className="mr-1 flex w-[58px] justify-center">
            <svg viewBox="0 0 14 14" className="h-[14px] w-[14px]"><path d="M1 1 L13 13 M13 1 L1 13" stroke="#000" /></svg>
          </button>
        </header>
        <nav className="flex h-[25px] shrink-0 items-center gap-[18px] bg-white pl-[7px] text-[15px] leading-6">
          {menus.map((menu) => (
            <button key={menu}>{menu}</button>
          ))}
        </nav>
        <Toolbar tool={tool} setTool={setTool} />
        <div className="flex min-h-0 flex-1">
          <Palette tool={tool} setTool={setTool} />
          <Viewport />
          <Tray />
        </div>
        <StatusBar />
      </div>
    </div>
  );
};

export default App;
